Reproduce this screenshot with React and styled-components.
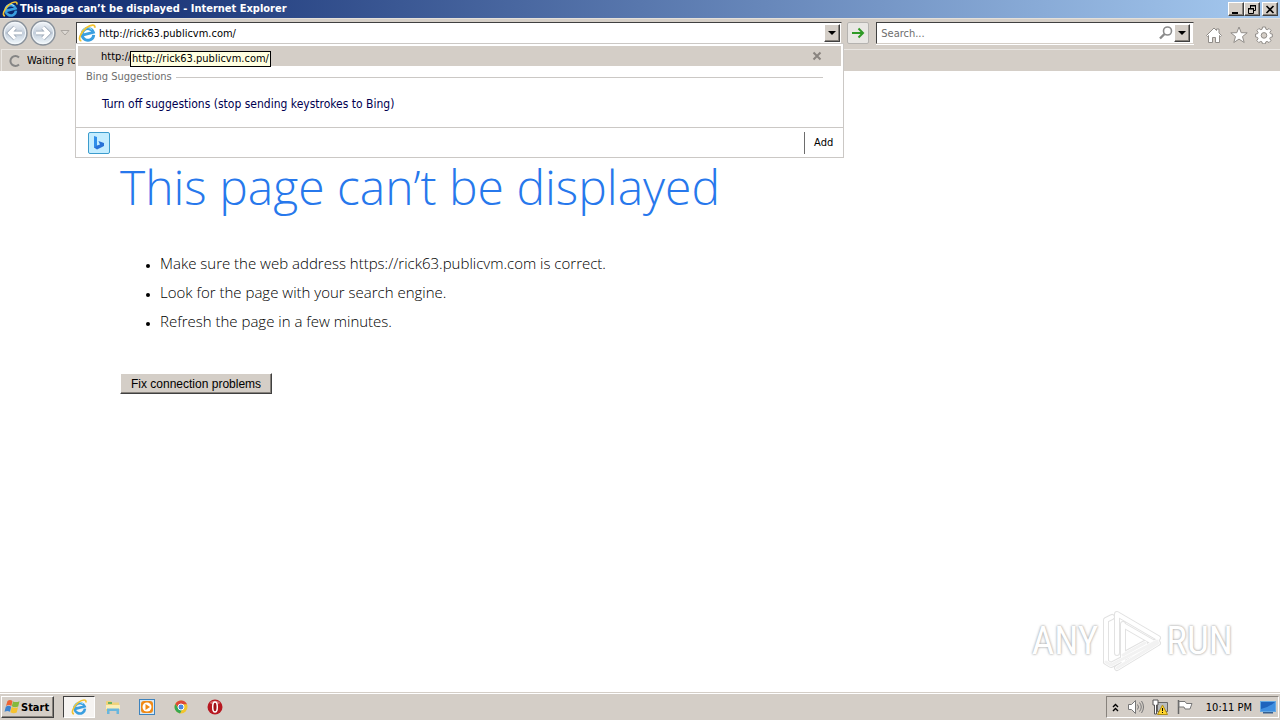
import styled, { createGlobalStyle, css } from "styled-components";

const GlobalStyle = createGlobalStyle`
    * {
        box-sizing: border-box;
    }
    body {
        margin: 0;
        background: #fff;
        color: #000;
        font-family: "DejaVu Sans Condensed", "DejaVu Sans", sans-serif;
        font-size: 11px;
    }
    button,
    input {
        font: inherit;
        color: inherit;
    }
    svg {
        display: block;
        flex: none;
    }
`;

const raised = css`
    background: #d4cec7;
    border: 1px solid;
    border-color: #fff #404040 #404040 #fff;
    box-shadow: inset -1px -1px 0 #87827c;
`;

const sunken = css`
    border: 1px solid;
    border-color: #87827c #fff #fff #87827c;
`;

const Screen = styled.div`
    min-height: 100vh;
    display: flex;
    flex-direction: column;
`;

const TitleBar = styled.header`
    height: 18px;
    padding: 0 2px;
    display: flex;
    align-items: center;
    gap: 2px;
    background: linear-gradient(90deg, #0a246a, #a6caf0);
    color: #fff;
`;

const Title = styled.h1`
    flex: 1;
    margin: 0;
    font-size: 11px;
    line-height: 16px;
    font-weight: bold;
`;

const WindowButtons = styled.div`
    display: flex;
    gap: ${(props) => props.$gap || 0}px;
`;

const WindowButton = styled.button`
    ${raised}
    width: 16px;
    height: 14px;
    padding: 0;
    display: flex;
    align-items: center;
    justify-content: center;
`;

const Toolbar = styled.div`
    height: 31px;
    padding: 3px 7px 5px 2px;
    display: flex;
    align-items: center;
    background: #d4cec7;
    border-top: 1px solid #e4e0da;
`;

const PlainButton = styled.button`
    padding: 0;
    border: 0;
    background: none;
    display: flex;
    align-items: center;
    justify-content: center;
`;

const NavGroup = styled.div`
    width: 74px;
    display: flex;
    align-items: center;
    gap: 2px;
`;

const AddressBar = styled.div`
    position: relative;
    flex: 1;
    height: 22px;
    padding: 1px;
    display: flex;
    align-items: center;
    background: #fff;
    border: 1px solid;
    border-color: #404040 #d4cec7 #d4cec7 #404040;
    box-shadow: 0 1px 0 #fff;
`;

const SearchBar = styled(AddressBar)`
    flex: none;
    width: 25%;
    padding: 1px 3px 1px 1px;
`;

const Field = styled.input`
    flex: 1;
    min-width: 0;
    height: 18px;
    padding: 0 3px;
    border: 0;
    outline: 0;
    background: none;
    &::placeholder {
        color: #6d6d6d;
        opacity: 1;
    }
`;

const DropButton = styled.button`
    ${raised}
    width: 16px;
    height: 18px;
    padding: 0;
    display: flex;
    align-items: center;
    justify-content: center;
`;

const GoButton = styled.button`
    width: 22px;
    height: 22px;
    margin: 0 7px 0 5px;
    padding: 0;
    display: flex;
    align-items: center;
    justify-content: center;
    background: #e9e7e4;
    border: 1px solid #b5b3b0;
    border-radius: 2px;
`;

const Tools = styled.div`
    margin-left: 11px;
    padding-top: 3px;
    display: flex;
    gap: 7px;
`;

const Suggestions = styled.div`
    position: absolute;
    z-index: 2;
    top: 20px;
    left: -2px;
    right: -3px;
    background: #fff;
    border: 1px solid #cbc8c5;
`;

const HistoryRow = styled.div`
    position: relative;
    height: 20px;
    margin: 2px 2px 0;
    padding: 0 19px 0 23px;
    display: flex;
    align-items: center;
    justify-content: space-between;
    background: #d4cec7;
`;

const HistoryLink = styled.a`
    color: #000;
    text-decoration: none;
`;

const Tooltip = styled.span`
    position: absolute;
    top: 5px;
    left: 52px;
    height: 16px;
    padding: 0 1px;
    line-height: 14px;
    background: #ffffe1;
    border: 1px solid #000;
`;

const GroupLabel = styled.div`
    margin: 4px 20px 0 10px;
    display: flex;
    align-items: center;
    gap: 4px;
    line-height: 14px;
    color: #6d6d6d;
    &::after {
        content: "";
        flex: 1;
        border-top: 1px solid #cbc8c5;
    }
`;

const TurnOff = styled.a`
    display: block;
    margin: 12px 26px 15px;
    font-size: 12px;
    line-height: 16px;
    color: #000050;
    text-decoration: none;
`;

const Providers = styled.div`
    height: 30px;
    padding: 0 10px 0 12px;
    display: flex;
    align-items: center;
    justify-content: space-between;
    border-top: 1px solid #cbc8c5;
`;

const AddButton = styled.button`
    height: 22px;
    padding: 0 0 0 9px;
    background: none;
    border: 0;
    border-left: 1px solid #6d6d6d;
`;

const TabRow = styled.div`
    height: 22px;
    display: flex;
    background: #d4cec7;
`;

const Tab = styled.div`
    flex: 1;
    margin-left: 1px;
    padding-left: 6px;
    display: flex;
    align-items: center;
    gap: 5px;
    border-top: 1px solid #e9e6e2;
    border-left: 1px solid #e9e6e2;
`;

const Page = styled.main`
    position: relative;
    flex: 1;
    padding: 80px 120px 40px;
    font-family: "Open Sans", "Noto Sans", sans-serif;
    font-weight: 300;
`;

const Heading = styled.h2`
    margin: 0;
    font-size: 48px;
    line-height: 72px;
    font-weight: 300;
    color: #2778ec;
`;

const Tips = styled.ul`
    margin: 26px 0 37px;
    padding-left: 40px;
    font-size: 15px;
    line-height: 29px;
    li::marker {
        font-size: 10px;
    }
`;

const FixButton = styled.button`
    ${raised}
    height: 21px;
    padding: 0 10px;
    font-family: "Liberation Sans", Arial, sans-serif;
    font-size: 12px;
`;

const Watermark = styled.div`
    position: absolute;
    right: 47px;
    bottom: 19px;
    display: flex;
    align-items: center;
    gap: 3px;
    font-family: "Liberation Sans Narrow", "Roboto Condensed", "Liberation Sans", sans-serif;
    font-size: 39px;
    line-height: 64px;
    font-weight: 400;
    color: #fff;
    text-shadow: 0 0 2px #aaa, 0 0 3px #bbb;
`;

const Taskbar = styled.footer`
    height: 28px;
    padding: 2px 1px 1px;
    display: flex;
    align-items: center;
    background: #d4cec7;
    border-top: 1px solid #d4cec7;
    box-shadow: inset 0 1px 0 #fff;
`;

const StartButton = styled.button`
    ${raised}
    height: 22px;
    padding: 0 4px 0 2px;
    display: flex;
    align-items: center;
    gap: 1px;
    font-weight: bold;
`;

const Apps = styled.nav`
    flex: 1;
    margin-left: 9px;
    display: flex;
    gap: 2px;
`;

const AppButton = styled.button`
    width: 32px;
    height: 22px;
    padding: 0;
    display: flex;
    align-items: center;
    justify-content: center;
    border: 1px solid transparent;
    background: none;
    ${(props) =>
        props.$active &&
        css`
            background: #f6f4f2;
            border-color: #404040 #fff #fff #404040;
        `}
`;

const Tray = styled.div`
    ${sunken}
    height: 22px;
    padding: 0 2px 0 5px;
    display: flex;
    align-items: center;
    gap: 8px;
`;

const Clock = styled.time`
    margin: 0 0 0 5px;
`;

const IeIcon = ({ size = 16 }) => (
    <svg width={size} height={size} viewBox="0 0 16 16" fill="none">
        <g transform="rotate(-14 8 8)">
            <path d="M13.400 11A5.200 5.200 0 1 1 13.600 8.800H4.500" stroke="#3a9fe0" strokeWidth="2.600" />
            <path d="M3.600 7.600A4.900 4.900 0 0 1 12.800 6" stroke="#96ddfb" strokeWidth="1" />
        </g>
        <path d="M3 15C-.6 14.400 2.400 7.400 7.400 3.400 11.500.4 15.800 0 14.800 3.400" stroke="#f2c230" strokeWidth="1.600" />
    </svg>
);

const arrows = {
    back: "M20 13H8M13 7.500L7.500 13l5.500 5.500",
    forward: "M6 13h12M13 7.500l5.500 5.500-5.500 5.500",
};

const NavIcon = ({ direction }) => (
    <svg width="26" height="26" viewBox="0 0 26 26">
        <defs>
            <linearGradient id={direction} x2="0" y2="1">
                <stop offset="0" stopColor="#f5f8fb" />
                <stop offset="0.5" stopColor="#c3cedb" />
                <stop offset="1" stopColor="#f4fbff" />
            </linearGradient>
        </defs>
        <circle cx="13" cy="13" r="12" fill={`url(#${direction})`} stroke="#8a929b" strokeWidth="1.400" />
        <circle cx="13" cy="13" r="10.600" fill="none" stroke="#f4f8fb" />
        <path d={arrows[direction]} fill="none" stroke="#93a0b0" strokeWidth="4.600" />
        <path d={arrows[direction]} fill="none" stroke="#fff" strokeWidth="3.200" />
    </svg>
);

const Arrow = () => (
    <svg width="8" height="4" viewBox="0 0 8 4">
        <path d="M0 0h8L4 4z" />
    </svg>
);

const FlagLogo = () => (
    <svg width="16" height="16" viewBox="0 0 16 16">
        <path d="M3.500 2Q6 0 8.500 2L7.400 7Q4.800 5.200 2 7z" fill="#ee6434" />
        <path d="M9 2.400q3 1.500 6.500-.2L14.200 7.400q-3.200 1.600-6.400-.1z" fill="#84b93c" />
        <path d="M1.800 7.700q2.700-1.800 5.400 0L6 12.800Q3.500 11 .5 12.800z" fill="#3d83d0" />
        <path d="M7.700 8.100q3 1.500 6.300.1L12.700 13.400q-3.200 1.600-6.300-.2z" fill="#f6c22f" />
    </svg>
);

const playLines = "M5 52V11l6-3M16 44V5l41 24M22 52V15M22 16l33 19M5 53l5 3 46-24M16 59l41-25M22 46l22-12";

const PlayLogo = () => (
    <svg width="62" height="64" viewBox="0 0 62 64" fill="none" strokeLinecap="round" strokeLinejoin="round">
        <path d={playLines} stroke="#e2e2e2" strokeWidth="6" />
        <path d={playLines} stroke="#fff" strokeWidth="4" />
        <path d="M5 53l5 3 46-24M16 59l41-25M22 46l22-12" stroke="#f2f2f2" strokeWidth="3" />
    </svg>
);

const App = () => {
    return (
        <Screen>
            <GlobalStyle />
            <TitleBar>
                <IeIcon />
                <Title>This page can’t be displayed - Internet Explorer</Title>
                <WindowButtons $gap={2}>
                    <WindowButtons>
                        <WindowButton aria-label="Minimize">
                            <svg width="10" height="9">
                                <path d="M1 7h6v2H1z" />
                            </svg>
                        </WindowButton>
                        <WindowButton aria-label="Restore">
                            <svg width="10" height="9" fill="none" stroke="#000">
                                <path d="M3 1h6M3.500 1v2M8.500 1v4.500H7M1 4h6M1.500 4v4.500h5V4" />
                                <path d="M3 .5h6M1 3.500h6" />
                            </svg>
                        </WindowButton>
                    </WindowButtons>
                    <WindowButton aria-label="Close">
                        <svg width="10" height="9">
                            <path d="M1.500 1l7 7M8.500 1l-7 7" stroke="#000" strokeWidth="1.600" />
                        </svg>
                    </WindowButton>
                </WindowButtons>
            </TitleBar>

            <Toolbar>
                <NavGroup>
                    <PlainButton aria-label="Back">
                        <NavIcon direction="back" />
                    </PlainButton>
                    <PlainButton aria-label="Forward">
                        <NavIcon direction="forward" />
                    </PlainButton>
                    <PlainButton aria-label="Recent pages">
                        <svg width="14" height="8" viewBox="0 0 14 8">
                            <path d="M3 1.500h8L7 6z" fill="#dedad5" stroke="#aaa5a0" />
                        </svg>
                    </PlainButton>
                </NavGroup>
                <AddressBar>
                    <IeIcon size={18} />
                    <Field aria-label="Address" defaultValue="http://rick63.publicvm.com/" />
                    <DropButton aria-label="Show address list">
                        <Arrow />
                    </DropButton>
                    <Suggestions>
                        <HistoryRow>
                            <HistoryLink href="#history">http://rick63.publicvm.com/</HistoryLink>
                            <PlainButton aria-label="Delete">
                                <svg width="10" height="10">
                                    <path d="M1.500 1.500l7 7M8.500 1.500l-7 7" stroke="#89847f" strokeWidth="2" />
                                </svg>
                            </PlainButton>
                            <Tooltip role="tooltip">http://rick63.publicvm.com/</Tooltip>
                        </HistoryRow>
                        <GroupLabel>Bing Suggestions</GroupLabel>
                        <TurnOff href="#suggestions">Turn off suggestions (stop sending keystrokes to Bing)</TurnOff>
                        <Providers>
                            <PlainButton aria-label="Bing">
                                <svg width="22" height="22" viewBox="0 0 22 22">
                                    <rect x=".5" y=".5" width="21" height="21" rx="1.500" fill="#c4edff" stroke="#3c9ccd" />
                                    <path d="M6 4l3 1v9l-3 2z" fill="#2f8eea" />
                                    <path d="M6 15.500l3-2 3-1-1.600-3.500 5.600 2v3L9 17.500z" fill="#2872d8" />
                                </svg>
                            </PlainButton>
                            <AddButton>Add</AddButton>
                        </Providers>
                    </Suggestions>
                </AddressBar>
                <GoButton aria-label="Go">
                    <svg width="14" height="14" viewBox="0 0 14 14">
                        <path d="M1 7h10M7.500 2.500L12 7l-4.500 4.500" fill="none" stroke="#2f9a26" strokeWidth="2" />
                    </svg>
                </GoButton>
                <SearchBar>
                    <Field type="search" aria-label="Search" placeholder="Search..." />
                    <PlainButton aria-label="Start search">
                        <svg width="16" height="16" viewBox="0 0 16 16" fill="none" stroke="#8b8b8b">
                            <circle cx="9.500" cy="6" r="4" strokeWidth="1.600" />
                            <path d="M6.500 9L2 13.500" strokeWidth="2.400" />
                        </svg>
                    </PlainButton>
                    <DropButton aria-label="Search options">
                        <Arrow />
                    </DropButton>
                </SearchBar>
                <Tools>
                    <PlainButton aria-label="Home">
                        <svg width="18" height="18" viewBox="0 0 18 18">
                            <path d="M1.500 9.500L9 2l2.500 2.500V3h2.500v4l2.500 2.500-1 1-1-1v7h-4v-5h-3v5h-4v-7l-1 1z" fill="#fff" stroke="#918d89" />
                        </svg>
                    </PlainButton>
                    <PlainButton aria-label="Favorites">
                        <svg width="18" height="18" viewBox="0 0 18 18">
                            <path d="M9 1l2.200 5.700 6 .1-4.700 3.800 1.700 5.900L9 13.100l-5.200 3.400 1.700-5.900L.8 6.800l6-.1z" fill="#fff" stroke="#918d89" />
                        </svg>
                    </PlainButton>
                    <PlainButton aria-label="Tools">
                        <svg width="18" height="18" viewBox="0 0 18 18">
                            <path
                                d="M7.500 1h3l.4 2.200 1.300.5 1.900-1.200 2 2-1.200 1.900.5 1.300 1.900.3v3l-2 .4-.5 1.300 1.200 1.900-2 2-1.900-1.200-1.300.5-.4 1.900h-3l-.4-1.900-1.300-.5-1.900 1.200-2-2L3 12.700l-.5-1.300L.6 11V8l2-.3.5-1.300-1.200-1.900 2-2 1.900 1.200 1.300-.5z"
                                fill="#fff"
                                stroke="#918d89"
                            />
                            <circle cx="9" cy="9.400" r="2.800" fill="#d4cec7" stroke="#918d89" />
                        </svg>
                    </PlainButton>
                </Tools>
            </Toolbar>

            <TabRow>
                <Tab>
                    <svg width="14" height="14" viewBox="0 0 14 14">
                        <path d="M11 3.500A5 5 0 1 0 11 10.500" fill="none" stroke="#858585" strokeWidth="2" />
                    </svg>
                    Waiting for
                </Tab>
            </TabRow>

            <Page>
                <Heading>This page can’t be displayed</Heading>
                <Tips>
                    <li>Make sure the web address https://rick63.publicvm.com is correct.</li>
                    <li>Look for the page with your search engine.</li>
                    <li>Refresh the page in a few minutes.</li>
                </Tips>
                <FixButton>Fix connection problems</FixButton>
                <Watermark>
                    <span>ANY</span>
                    <PlayLogo />
                    <span>RUN</span>
                </Watermark>
            </Page>

            <Taskbar>
                <StartButton>
                    <FlagLogo />
                    Start
                </StartButton>
                <Apps>
                    <AppButton $active aria-label="Internet Explorer">
                        <IeIcon />
                    </AppButton>
                    <AppButton aria-label="File Explorer">
                        <svg width="16" height="16" viewBox="0 0 16 16">
                            <path d="M1 2h5l1 1.500h7V12H1z" fill="#f0d27a" />
                            <path d="M3 3h4v2H3z" fill="#6db25f" />
                            <path d="M1 6h14v4H1z" fill="#fbeeb6" />
                            <path d="M2 15V9.500h12V15h-2.500v-3h-7v3z" fill="#69b6dd" />
                        </svg>
                    </AppButton>
                    <AppButton aria-label="Media Player">
                        <svg width="16" height="16" viewBox="0 0 16 16">
                            <rect x=".5" y=".5" width="15" height="15" fill="#d6e9f7" stroke="#3e83bd" />
                            <rect x="2" y="2" width="12" height="12" rx="3" fill="#f08a17" />
                            <circle cx="8" cy="8" r="4.500" fill="#fff" />
                            <path d="M6.500 5l4.500 3-4.500 3z" fill="#f08a17" />
                        </svg>
                    </AppButton>
                    <AppButton aria-label="Chrome">
                        <svg width="14" height="14" viewBox="0 0 14 14">
                            <circle cx="7" cy="7" r="6.500" fill="#f2c52d" />
                            <path d="M1.300 4A6.500 6.500 0 0 1 13 4.300H7L5 8.500z" fill="#dd4838" />
                            <path d="M1.300 4L5 9l3 .8-2 3.600A6.500 6.500 0 0 1 1.300 4z" fill="#37a853" />
                            <circle cx="7" cy="7" r="3" fill="#4b88df" stroke="#fff" />
                        </svg>
                    </AppButton>
                    <AppButton aria-label="Opera">
                        <svg width="16" height="16" viewBox="0 0 16 16">
                            <circle cx="8" cy="8" r="7.500" fill="#b71820" />
                            <path d="M2.500 4a7 6 0 0 1 11 0Q8 7 2.500 4z" fill="#d9656a" />
                            <ellipse cx="8" cy="8" rx="2.300" ry="5" fill="#a11017" stroke="#fff" strokeWidth="1.500" />
                        </svg>
                    </AppButton>
                </Apps>
                <Tray>
                    <PlainButton aria-label="Show hidden icons">
                        <svg width="7" height="9" fill="none" stroke="#000" strokeWidth="1.400">
                            <path d="M1 4l2.500-2.500L6 4M1 8l2.500-2.500L6 8" />
                        </svg>
                    </PlainButton>
                    <svg width="17" height="16" viewBox="0 0 17 16" fill="none" stroke="#777">
                        <path d="M1.500 5.500h3l4-4v13l-4-4h-3z" fill="#fff" />
                        <path d="M10.500 5.500q2 2.500 0 5M12.500 3.500q3.500 4.500 0 9M14.500 2q4 6 0 12" />
                    </svg>
                    <svg width="16" height="16" viewBox="0 0 16 16">
                        <path d="M5.500 3.500h10v9h-10z" fill="#b9bcbd" stroke="#666" />
                        <path d="M1 1h5v5H4.500v9H2.500V6H1z" fill="#fff" stroke="#555" />
                        <path d="M10.500 6l5 9.500h-10z" fill="#ffd52d" stroke="#b08d13" />
                        <path d="M10 9h1v3h-1zM10 13h1v1h-1z" />
                    </svg>
                    <svg width="17" height="16" viewBox="0 0 17 16">
                        <path d="M2.500 1v14" stroke="#666" strokeWidth="1.500" />
                        <path d="M3 2.500h6l1.500 2H16L14 10H9L8 8H3z" fill="#fff" stroke="#777" />
                    </svg>
                    <Clock>10:11 PM</Clock>
                    <svg width="16" height="14" viewBox="0 0 16 14">
                        <rect x=".5" y="1.500" width="15" height="10" fill="#1f63bd" stroke="#65a8e2" />
                        <path d="M1 9Q8 8 15 2v9H1z" fill="#408ee0" />
                        <path d="M3 12h10v1.500H3z" fill="#365f8f" />
                    </svg>
                </Tray>
            </Taskbar>
        </Screen>
    );
};

export default App;
